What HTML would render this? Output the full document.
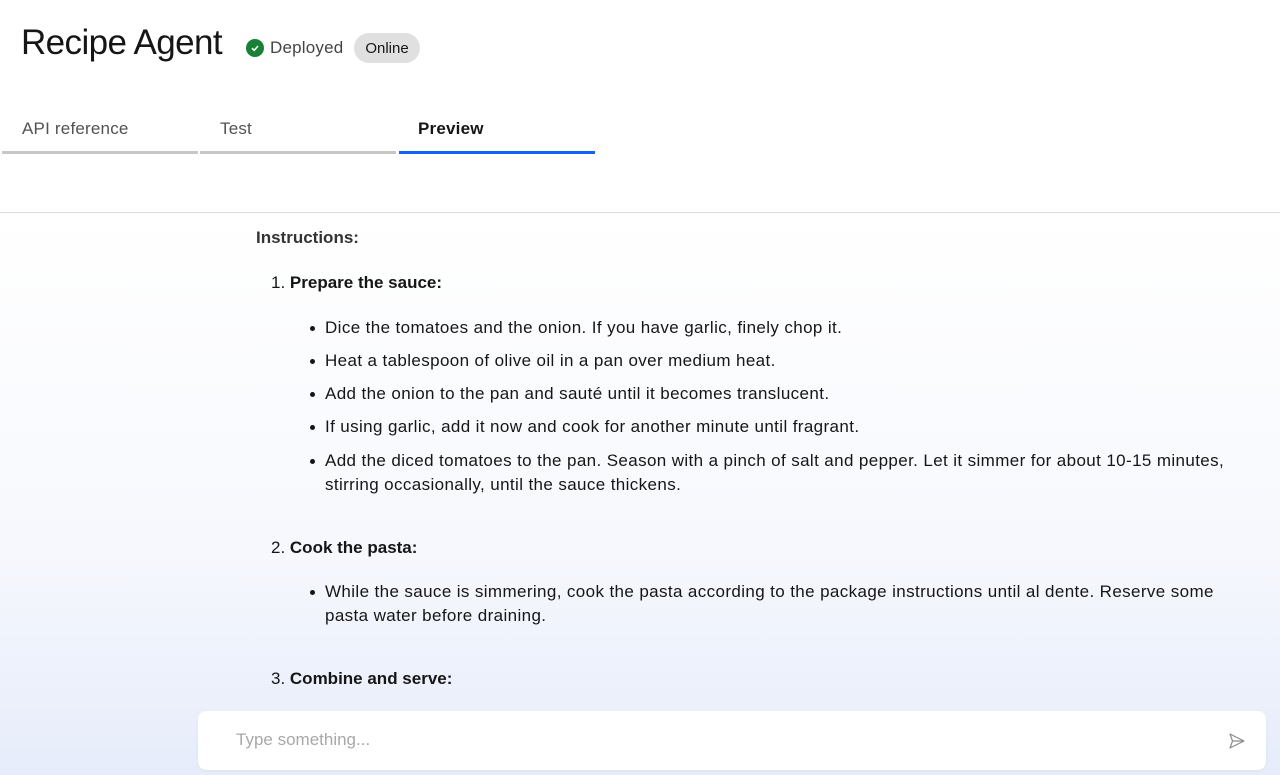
<!DOCTYPE html>
<html><head><meta charset="utf-8"><style>
*{margin:0;padding:0;box-sizing:border-box}
body{width:1280px;height:775px;overflow:hidden;font-family:"Liberation Sans",sans-serif;color:#161616;background:#fff;position:relative}
h1{position:absolute;left:21px;top:23px;font-size:35px;font-weight:400;letter-spacing:-0.6px}
.dep{position:absolute;left:246px;top:38px;font-size:17px;color:#444;display:flex;align-items:center;letter-spacing:0.2px}
.dot{width:18px;height:18px;border-radius:50%;background:#198038;margin-right:6px;display:flex;align-items:center;justify-content:center}
.pill{position:absolute;left:354px;top:33px;width:66px;height:30px;border-radius:15px;background:#e0e0e0;font-size:15px;line-height:31px;text-align:center;color:#161616}
.tab{position:absolute;top:119px;font-size:17px;color:#525252;letter-spacing:0.2px}
.line{position:absolute;top:151px;height:3px;width:196px;background:#c6c6c6}
.content{position:absolute;left:0;top:212px;width:1280px;height:563px;border-top:1px solid #dcdcdc;background:linear-gradient(#fff 0%,#f6f8fd 60%,#e6ecfa 100%)}
.t{position:absolute;font-size:17px;line-height:24px;letter-spacing:0.38px}
.b{font-weight:700}
.bul{position:absolute;left:310px;width:5px;height:5px;border-radius:50%;background:#161616}
.input{position:absolute;left:198px;top:711px;width:1068px;height:59px;background:#fff;border-radius:8px;box-shadow:0 1px 3px rgba(0,0,0,0.06)}
</style></head><body>
<h1>Recipe Agent</h1>
<div class="dep"><div class="dot"><svg width="10" height="10" viewBox="0 0 10 10"><path d="M2 5.2L4.2 7.3 8 3" stroke="#fff" stroke-width="1.6" fill="none"/></svg></div>Deployed</div>
<div class="pill">Online</div>
<div class="tab" style="left:22px">API reference</div>
<div class="tab" style="left:220px">Test</div>
<div class="tab b" style="left:418px;color:#161616">Preview</div>
<div class="line" style="left:2px"></div>
<div class="line" style="left:200px"></div>
<div class="line" style="left:399px;background:#0f62fe"></div>
<div class="content"></div>
<div class="t b" style="left:256px;top:226px;color:#333;letter-spacing:0">Instructions:</div>
<div class="t" style="left:271px;top:271px;letter-spacing:0">1. <b>Prepare the sauce:</b></div>
<div class="bul" style="top:326px"></div><div class="t" style="left:325px;top:316px">Dice the tomatoes and the onion. If you have garlic, finely chop it.</div>
<div class="bul" style="top:359px"></div><div class="t" style="left:325px;top:349px">Heat a tablespoon of olive oil in a pan over medium heat.</div>
<div class="bul" style="top:392px"></div><div class="t" style="left:325px;top:382px">Add the onion to the pan and sauté until it becomes translucent.</div>
<div class="bul" style="top:425px"></div><div class="t" style="left:325px;top:415px">If using garlic, add it now and cook for another minute until fragrant.</div>
<div class="bul" style="top:459px"></div><div class="t" style="left:325px;top:449px;width:920px">Add the diced tomatoes to the pan. Season with a pinch of salt and pepper. Let it simmer for about 10-15 minutes,<br>stirring occasionally, until the sauce thickens.</div>
<div class="t" style="left:271px;top:536px;letter-spacing:0">2. <b>Cook the pasta:</b></div>
<div class="bul" style="top:590px"></div><div class="t" style="left:325px;top:580px;width:920px">While the sauce is simmering, cook the pasta according to the package instructions until al dente. Reserve some<br>pasta water before draining.</div>
<div class="t" style="left:271px;top:667px;letter-spacing:0">3. <b>Combine and serve:</b></div>
<div class="input"><div style="position:absolute;left:38px;top:19px;font-size:17px;color:#a8a8a8">Type something...</div>
<svg style="position:absolute;left:1030px;top:21px" width="18" height="18" viewBox="0 0 18 18"><path d="M2 2L16 9 2 16 4.5 9Z M4.5 9H16" stroke="#8d8d8d" stroke-width="1.2" fill="none" stroke-linejoin="round"/></svg></div>
</body></html>
